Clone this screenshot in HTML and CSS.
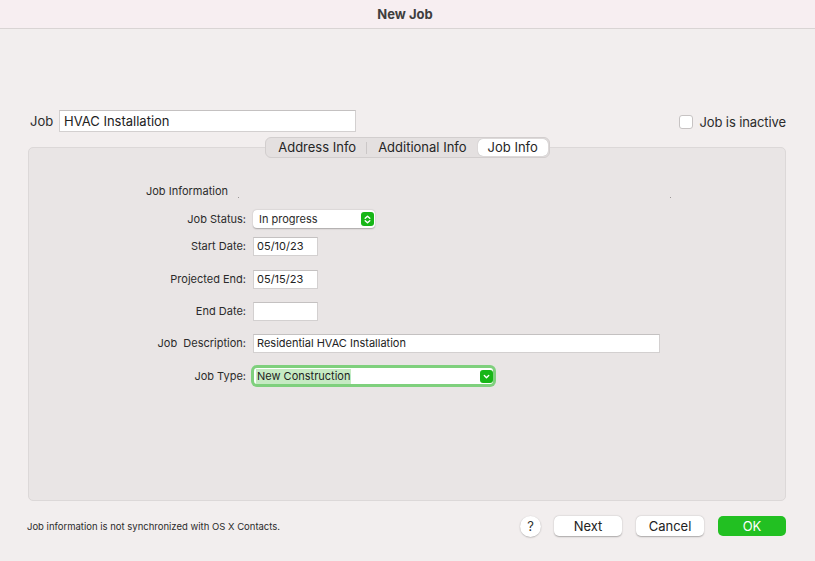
FILE: index.html
```html
<!DOCTYPE html>
<html>
<head>
<meta charset="utf-8">
<link rel="stylesheet" href="styles.css">
</head>
<body>
<div class="window">
  <div class="titlebar">New Job</div>
  <div class="content">
    <div class="job-row">
      <label class="job-label">Job</label>
      <div class="text-field job-field">HVAC Installation</div>
      <div class="spacer"></div>
      <div class="check"><span class="box"></span><span>Job is inactive</span></div>
    </div>
    <div class="tabs-wrap">
      <div class="tabs">
        <span class="tab">Address Info</span>
        <span class="sep"></span>
        <span class="tab">Additional Info</span>
        <span class="tab selected">Job Info</span>
      </div>
    </div>
    <div class="panel">
      <div class="section-title">Job Information<span class="dot dot-a"></span><span class="dot dot-b"></span></div>
      <div class="form">
        <div class="row first">
          <span class="lbl">Job Status:</span>
          <div class="popup status">
            <span>In progress</span>
            <span class="arrow">
              <svg width="13" height="13" viewBox="0 0 13 13"><path d="M4.2 5.3 L6.5 3.2 L8.8 5.3 M4.2 7.7 L6.5 9.8 L8.8 7.7" fill="none" stroke="#fff" stroke-width="1.4" stroke-linecap="round" stroke-linejoin="round"/></svg>
            </span>
          </div>
        </div>
        <div class="row">
          <span class="lbl">Start Date:</span>
          <div class="text-field small date">05/10/23</div>
        </div>
        <div class="row gap13">
          <span class="lbl">Projected End:</span>
          <div class="text-field small date">05/15/23</div>
        </div>
        <div class="row">
          <span class="lbl">End Date:</span>
          <div class="text-field small date"></div>
        </div>
        <div class="row">
          <span class="lbl">Job&nbsp; Description:</span>
          <div class="text-field small desc">Residential HVAC Installation</div>
        </div>
        <div class="row gap13">
          <span class="lbl">Job Type:</span>
          <div class="popup type">
            <span class="sel">New Construction</span>
            <span class="arrow">
              <svg width="13" height="13" viewBox="0 0 13 13"><path d="M4.3 5.6 L6.5 7.7 L8.7 5.6" fill="none" stroke="#fff" stroke-width="1.4" stroke-linecap="round" stroke-linejoin="round"/></svg>
            </span>
          </div>
        </div>
      </div>
    </div>
    <div class="footer">
      <span class="note">Job information is not synchronized with OS X Contacts.</span>
      <div class="spacer"></div>
      <span class="help">?</span>
      <span class="btn">Next</span>
      <span class="btn">Cancel</span>
      <span class="btn ok">OK</span>
    </div>
  </div>
</div>
</body>
</html>
```
FILE: styles.css
```css
* { box-sizing: border-box; }
html, body { margin: 0; padding: 0; }
body {
  width: 815px;
  height: 561px;
  background: #f2eeee;
  font-family: "Inter", "Liberation Sans", sans-serif;
  color: #2b2b2b;
  overflow: hidden;
}
.window { width: 815px; height: 561px; display: flex; flex-direction: column; }
.titlebar {
  height: 29px;
  background: #f7eef1;
  border-bottom: 1px solid #d9d4d4;
  text-align: center;
  font-weight: 700;
  font-size: 13px;
  line-height: 28px;
  color: #3e3e3e;
  padding-right: 5px;
}
.content { padding: 0 29px 0 28px; }
.job-row {
  margin-top: 81px;
  display: flex;
  align-items: center;
  height: 22px;
}
.job-label { font-size: 13px; margin-left: 2px; width: 29px; }
.text-field {
  background: #fff;
  border: 1px solid #d3d0d0;
  border-top-color: #c4c1c1;
  font-size: 13px;
  padding-left: 4px;
  display: flex;
  align-items: center;
  color: #222;
}
.job-field { width: 297px; height: 22px; }
.spacer { flex: 1; }
.check { display: flex; align-items: center; font-size: 13px; gap: 6px; margin-top: 1px; letter-spacing: -0.1px; }
.check .box {
  width: 14px; height: 14px;
  background: #fff;
  border: 1px solid #c7c3c3;
  border-radius: 3px;
}
.tabs-wrap {
  margin-top: 5px;
  display: flex;
  justify-content: center;
  position: relative;
  z-index: 1;
  height: 20px;
}
.tabs {
  display: flex;
  align-items: center;
  height: 21px;
  background: #e4e0e0;
  border: 1px solid #d2cece;
  border-radius: 6px;
  padding: 0 1px;
  margin-left: 1px;
}
.tab {
  font-size: 13px;
  padding: 0 10px 0 11px;
  line-height: 17px;
  color: #262626;
}
.tab.selected {
  background: #fff;
  border-radius: 5px;
  box-shadow: 0 0 1px rgba(0,0,0,0.3);
  padding: 0 10px;
  margin-left: 1px;
}
.sep { width: 1px; height: 12px; background: #cbc7c7; }
.panel {
  margin-top: -10px;
  height: 354px;
  background: #e9e5e5;
  border: 1px solid #dcd8d8;
  border-radius: 5px;
  position: relative;
}
.section-title {
  margin-top: 36px;
  margin-left: 117px;
  font-size: 11px;
  line-height: 14px;
  color: #2b2b2b;
}
.dot { position: absolute; width: 1px; height: 1px; background: #9a9696; }
.dot-a { left: 209px; top: 49px; }
.dot-b { left: 641px; top: 49px; }
.form { display: flex; flex-direction: column; gap: 12px; }
.row { display: flex; align-items: center; height: 20px; }
.row.first { margin-top: 11px; margin-bottom: -5px; }
.row.gap13 { margin-top: 1px; }
.lbl {
  width: 217px;
  text-align: right;
  font-size: 11px;
  color: #2b2b2b;
  margin-right: 7px;
}
.text-field.small { font-size: 11px; height: 19px; padding-left: 3px; }
.date { width: 65px; }
.desc { width: 407px; }
.popup {
  display: flex;
  align-items: center;
  justify-content: space-between;
  background: #fff;
  font-size: 11px;
  border-radius: 4px;
}
.popup.status {
  width: 122px;
  height: 18px;
  padding: 0 1px 0 6px;
  box-shadow: 0 0.5px 1.5px rgba(0,0,0,0.28);
}
.arrow {
  width: 13px; height: 14px;
  background: #17b617;
  border-radius: 3px;
  display: flex; align-items: center; justify-content: center;
}
.popup.type {
  width: 239px;
  height: 16px;
  margin-left: 1px;
  padding: 0 0 0 2px;
  border-radius: 3px;
  box-shadow: 0 0 0 3px #7fd07d;
  color: #1e1e1e;
}
.popup.type .arrow { height: 13px; margin-right: 0; }
.sel { background: #c6eac3; padding: 0 1px; line-height: 15px; }
.footer {
  margin-top: 15px;
  display: flex;
  align-items: center;
  height: 20px;
}
.note { font-size: 9.5px; color: #2b2b2b; margin-left: -1px; }
.help {
  width: 21px; height: 21px;
  border-radius: 50%;
  background: #fff;
  box-shadow: 0 0.5px 1.5px rgba(0,0,0,0.3);
  display: flex; align-items: center; justify-content: center;
  font-size: 13px; color: #333;
  margin-right: 13px;
}
.btn {
  width: 68px; height: 20px;
  border-radius: 5px;
  background: #fff;
  box-shadow: 0 0.5px 1.5px rgba(0,0,0,0.3);
  display: flex; align-items: center; justify-content: center;
  font-size: 13px; color: #222;
  margin-right: 14px;
}
.btn.ok { background: #22c022; color: #fff; margin-right: 0; box-shadow: none; }
```
